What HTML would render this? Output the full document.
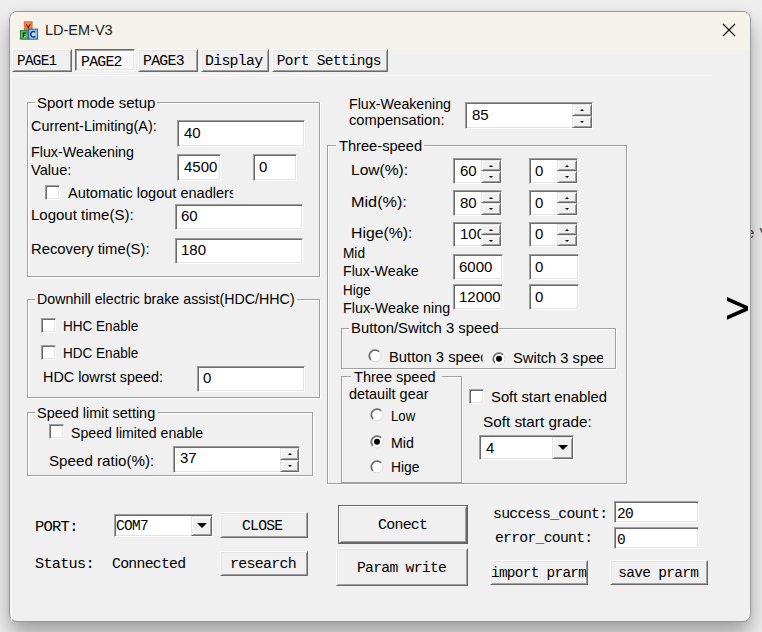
<!DOCTYPE html><html><head><meta charset="utf-8"><style>
*{margin:0;padding:0;box-sizing:border-box}
html,body{width:762px;height:632px;overflow:hidden;background:#eeeeee}
body{position:relative;font-family:"Liberation Sans",sans-serif}
.win{position:absolute;left:9px;top:11px;width:742px;height:611px;background:#f0f0f0;border:1px solid #9a9a9a;border-radius:8px;overflow:hidden;box-shadow:0 12px 20px rgba(0,0,0,.32),0 0 4px rgba(0,0,0,.05)}
.tb{position:absolute;left:0;top:0;right:0;height:37px;background:#f5f2ec}
.t{position:absolute;white-space:pre;line-height:1;color:#000}
.s{font-family:"Liberation Sans",sans-serif;font-size:15px}
.m{font-family:"Liberation Mono",monospace;font-size:14.5px;letter-spacing:-0.7px}
.ed{position:absolute;background:#fff;border:1px solid;border-color:#a0a0a0 #fff #fff #a0a0a0;box-shadow:inset 1px 1px 0 #696969,inset -1px -1px 0 #e3e3e3}
.bt{position:absolute;background:#f0f0f0;border:1px solid;border-color:#fff #696969 #696969 #fff;box-shadow:inset 1px 1px 0 #e3e3e3,inset -1px -1px 0 #a0a0a0}
.sb{position:absolute;background:#f0f0f0;border:1px solid;border-color:#e3e3e3 #696969 #696969 #e3e3e3;box-shadow:inset 1px 1px 0 #fff,inset -1px -1px 0 #a0a0a0}
.bt.df{outline:1px solid #646464}
.pr{position:absolute;background:#f7f7f7;border:1px solid;border-color:#696969 #fff #fff #696969;box-shadow:inset 1px 1px 0 #a0a0a0,inset -1px -1px 0 #e3e3e3}
.cb{position:absolute;background:#fff;border:1px solid;border-color:#a0a0a0 #fff #fff #a0a0a0;box-shadow:inset 1px 1px 0 #696969,inset -1px -1px 0 #e3e3e3}
.rd{position:absolute;width:13px;height:13px;border-radius:50%;background:#fff;border:1px solid;border-color:#a0a0a0 #fff #fff #a0a0a0;box-shadow:inset 1px 1px 0 #696969,inset -1px -1px 0 #e3e3e3}
.rd i{position:absolute;left:3px;top:3px;width:5px;height:5px;border-radius:50%;background:#000}
.gb{position:absolute;border:1px solid #a0a0a0;box-shadow:inset 1px 1px 0 #fff,1px 1px 0 #fff}
.patch{position:absolute;background:#f0f0f0}
i.up,i.dn{position:absolute;left:50%;top:50%;width:0;height:0;border-left:2px solid transparent;border-right:2px solid transparent;margin-left:-2px}
i.up{border-bottom:2px solid #000;margin-top:-1px}
i.dn{border-top:2px solid #000;margin-top:-1px}
i.dd{position:absolute;left:50%;top:50%;width:0;height:0;border-left:5px solid transparent;border-right:5px solid transparent;border-top:5px solid #000;margin-left:-5px;margin-top:-3px}
</style></head><body><div class="win"><div class="tb"></div></div>
<svg style="position:absolute;left:19px;top:20px" width="20" height="21" viewBox="0 0 20 21"><defs><radialGradient id="go" cx="50%" cy="40%" r="70%"><stop offset="0" stop-color="#f7a060"/><stop offset="1" stop-color="#dd6e2a"/></radialGradient><radialGradient id="gg" cx="50%" cy="50%" r="70%"><stop offset="0" stop-color="#9ee0a0"/><stop offset="1" stop-color="#2f9a40"/></radialGradient><radialGradient id="gb" cx="50%" cy="50%" r="70%"><stop offset="0" stop-color="#d0e8fa"/><stop offset="1" stop-color="#6aa0d8"/></radialGradient></defs><rect x="5.3" y="1.8" width="7.8" height="7.8" fill="url(#go)" stroke="#c86a30" stroke-width="0.8"/><path d="M7.3 4.3L9.2 7.6L11.1 4.3" stroke="#7a1e08" stroke-width="1.3" fill="none"/><rect x="1.4" y="10.6" width="7.8" height="8.6" fill="url(#gg)" stroke="#1f7a30" stroke-width="0.9"/><path d="M4.3 17.6V13H7.3M4.3 15.1H6.6" stroke="#0c4a18" stroke-width="1.4" fill="none"/><rect x="9.4" y="9.1" width="9.2" height="10.1" fill="url(#gb)" stroke="#2a5a9a" stroke-width="0.9"/><path d="M16.2 12.3A2.6 2.8 0 1 0 16.2 16.2" stroke="#143f85" stroke-width="1.5" fill="none"/></svg>
<div class="t s" style="left:45.00px;top:22px;color:#1c1c1c;font-size:14.5px;top:23px">LD-EM-V3</div>
<svg style="position:absolute;left:722px;top:23px" width="14" height="14" viewBox="0 0 14 14"><path d="M1 1L13 13M13 1L1 13" stroke="#1a1a1a" stroke-width="1.3"/></svg>
<div class="bt" style="left:12px;top:49px;width:60px;height:23px"></div>
<div class="pr" style="left:75px;top:49px;width:60px;height:22px"></div>
<div class="bt" style="left:138px;top:49px;width:60px;height:23px"></div>
<div class="bt" style="left:201px;top:49px;width:68px;height:23px"></div>
<div class="bt" style="left:272px;top:49px;width:116px;height:23px"></div>
<div class="t m" style="left:16.72px;top:54px;transform:scaleX(0.9846);transform-origin:0 0;">PAGE1</div>
<div class="t m" style="left:80.68px;top:55px;transform:scaleX(1.0179);transform-origin:0 0;">PAGE2</div>
<div class="t m" style="left:142.58px;top:54px;transform:scaleX(1.0231);transform-origin:0 0;">PAGE3</div>
<div class="t m" style="left:205.37px;top:54px;transform:scaleX(1.0255);transform-origin:0 0;">Display</div>
<div class="t m" style="left:276.70px;top:54px;">Port Settings</div>
<div style="position:absolute;left:11px;top:75px;width:701px;height:1px;background:#fff"></div>
<div style="position:absolute;left:11px;top:75px;width:1px;height:546px;background:#fff"></div>
<div class="gb" style="left:27px;top:102px;width:293px;height:175px"></div>
<div class="patch" style="left:35px;top:96px;width:122px;height:14px"></div>
<div class="t s" style="left:37.00px;top:95px;">Sport mode setup</div>
<div class="t s" style="left:31.04px;top:118px;transform:scaleX(0.9612);transform-origin:0 0;">Current-Limiting(A):</div>
<div class="ed" style="left:177px;top:120px;width:128px;height:27px"></div>
<div class="t s" style="left:184.00px;top:125px;">40</div>
<div class="t s" style="left:31.05px;top:144px;transform:scaleX(0.9528);transform-origin:0 0;">Flux-Weakening</div>
<div class="t s" style="left:31.30px;top:162px;transform:scaleX(0.9750);transform-origin:0 0;">Value:</div>
<div class="ed" style="left:177px;top:154px;width:44px;height:27px"></div>
<div class="t s" style="left:184.00px;top:159px;">4500</div>
<div class="ed" style="left:253px;top:154px;width:44px;height:27px"></div>
<div class="t s" style="left:259.00px;top:159px;">0</div>
<div class="cb" style="left:45px;top:185px;width:15px;height:15px"></div>
<div class="t s" style="left:68.00px;top:185px;width:170.10px;overflow:hidden;padding-bottom:5px;transform:scaleX(0.9700);transform-origin:0 0;">Automatic logout enadlers</div>
<div class="t s" style="left:31.00px;top:207px;">Logout time(S):</div>
<div class="ed" style="left:175px;top:204px;width:128px;height:26px"></div>
<div class="t s" style="left:181.00px;top:208px;">60</div>
<div class="t s" style="left:31.01px;top:241px;transform:scaleX(0.9873);transform-origin:0 0;">Recovery time(S):</div>
<div class="ed" style="left:175px;top:238px;width:128px;height:26px"></div>
<div class="t s" style="left:181.00px;top:242px;">180</div>
<div class="gb" style="left:27px;top:299px;width:293px;height:99px"></div>
<div class="patch" style="left:35px;top:292px;width:262px;height:14px"></div>
<div class="t s" style="left:37.05px;top:291px;transform:scaleX(0.9481);transform-origin:0 0;">Downhill electric brake assist(HDC/HHC)</div>
<div class="cb" style="left:41px;top:318px;width:15px;height:15px"></div>
<div class="t s" style="left:63.10px;top:318px;transform:scaleX(0.9024);transform-origin:0 0;">HHC Enable</div>
<div class="cb" style="left:41px;top:345px;width:15px;height:15px"></div>
<div class="t s" style="left:63.10px;top:345px;transform:scaleX(0.9024);transform-origin:0 0;">HDC Enable</div>
<div class="t s" style="left:43.04px;top:369px;transform:scaleX(0.9593);transform-origin:0 0;">HDC lowrst speed:</div>
<div class="ed" style="left:197px;top:366px;width:108px;height:26px"></div>
<div class="t s" style="left:203.00px;top:370px;">0</div>
<div class="gb" style="left:27px;top:412px;width:286px;height:64px"></div>
<div class="patch" style="left:35px;top:406px;width:123px;height:14px"></div>
<div class="t s" style="left:37.04px;top:405px;transform:scaleX(0.9645);transform-origin:0 0;">Speed limit setting</div>
<div class="cb" style="left:49px;top:424px;width:15px;height:15px"></div>
<div class="t s" style="left:71.06px;top:425px;transform:scaleX(0.9424);transform-origin:0 0;">Speed limited enable</div>
<div class="t s" style="left:48.99px;top:453px;transform:scaleX(1.0098);transform-origin:0 0;">Speed ratio(%):</div>
<div class="ed" style="left:173px;top:446px;width:127px;height:27px"></div>
<div class="t s" style="left:180.00px;top:450px;">37</div>
<div class="sb" style="left:280px;top:448px;width:19px;height:12px"><i class="up"></i></div>
<div class="sb" style="left:280px;top:460px;width:19px;height:12px"><i class="dn"></i></div>
<div class="t s" style="left:349.06px;top:96px;transform:scaleX(0.9434);transform-origin:0 0;">Flux-Weakening</div>
<div class="t s" style="left:349.02px;top:112px;transform:scaleX(0.9789);transform-origin:0 0;">compensation:</div>
<div class="ed" style="left:465px;top:102px;width:128px;height:27px"></div>
<div class="t s" style="left:472.00px;top:107px;">85</div>
<div class="sb" style="left:572px;top:104px;width:20px;height:12px"><i class="up"></i></div>
<div class="sb" style="left:572px;top:116px;width:20px;height:12px"><i class="dn"></i></div>
<div class="gb" style="left:327px;top:145px;width:300px;height:339px"></div>
<div class="patch" style="left:336px;top:139px;width:88px;height:14px"></div>
<div class="t s" style="left:339.00px;top:138px;transform:scaleX(0.9762);transform-origin:0 0;">Three-speed</div>
<div class="t s" style="left:350.96px;top:162px;transform:scaleX(1.0377);transform-origin:0 0;">Low(%):</div>
<div class="ed" style="left:453px;top:158px;width:49px;height:26px"></div>
<div class="t s" style="left:460.00px;top:163px;">60</div>
<div class="sb" style="left:481px;top:160px;width:20px;height:11px"><i class="up"></i></div>
<div class="sb" style="left:481px;top:171px;width:20px;height:12px"><i class="dn"></i></div>
<div class="ed" style="left:529px;top:158px;width:49px;height:26px"></div>
<div class="t s" style="left:535.00px;top:163px;">0</div>
<div class="sb" style="left:557px;top:160px;width:20px;height:11px"><i class="up"></i></div>
<div class="sb" style="left:557px;top:171px;width:20px;height:12px"><i class="dn"></i></div>
<div class="t s" style="left:350.92px;top:194px;transform:scaleX(1.0816);transform-origin:0 0;">Mid(%):</div>
<div class="ed" style="left:453px;top:190px;width:49px;height:26px"></div>
<div class="t s" style="left:460.00px;top:195px;">80</div>
<div class="sb" style="left:481px;top:192px;width:20px;height:11px"><i class="up"></i></div>
<div class="sb" style="left:481px;top:203px;width:20px;height:12px"><i class="dn"></i></div>
<div class="ed" style="left:529px;top:190px;width:49px;height:26px"></div>
<div class="t s" style="left:535.00px;top:195px;">0</div>
<div class="sb" style="left:557px;top:192px;width:20px;height:11px"><i class="up"></i></div>
<div class="sb" style="left:557px;top:203px;width:20px;height:12px"><i class="dn"></i></div>
<div class="t s" style="left:350.95px;top:225px;transform:scaleX(1.0536);transform-origin:0 0;">Hige(%):</div>
<div class="ed" style="left:453px;top:222px;width:49px;height:25px"></div>
<div class="t s" style="left:460.00px;top:226px;width:22.00px;overflow:hidden;padding-bottom:5px;">100</div>
<div class="sb" style="left:481px;top:224px;width:20px;height:11px"><i class="up"></i></div>
<div class="sb" style="left:481px;top:235px;width:20px;height:11px"><i class="dn"></i></div>
<div class="ed" style="left:529px;top:222px;width:49px;height:25px"></div>
<div class="t s" style="left:535.00px;top:226px;">0</div>
<div class="sb" style="left:557px;top:224px;width:20px;height:11px"><i class="up"></i></div>
<div class="sb" style="left:557px;top:235px;width:20px;height:11px"><i class="dn"></i></div>
<div class="t s" style="left:343.09px;top:245px;transform:scaleX(0.9091);transform-origin:0 0;">Mid</div>
<div class="t s" style="left:343.05px;top:263px;transform:scaleX(0.9487);transform-origin:0 0;">Flux-Weake</div>
<div class="ed" style="left:453px;top:254px;width:50px;height:26px"></div>
<div class="t s" style="left:459.00px;top:259px;">6000</div>
<div class="ed" style="left:529px;top:254px;width:50px;height:26px"></div>
<div class="t s" style="left:535.00px;top:259px;">0</div>
<div class="t s" style="left:343.10px;top:282px;transform:scaleX(0.8966);transform-origin:0 0;">Hige</div>
<div class="t s" style="left:343.05px;top:300px;transform:scaleX(0.9545);transform-origin:0 0;">Flux-Weake ning</div>
<div class="ed" style="left:453px;top:284px;width:50px;height:26px"></div>
<div class="t s" style="left:459.00px;top:289px;">12000</div>
<div class="ed" style="left:529px;top:284px;width:50px;height:26px"></div>
<div class="t s" style="left:535.00px;top:289px;">0</div>
<div class="gb" style="left:341px;top:328px;width:275px;height:41px"></div>
<div class="patch" style="left:349px;top:321px;width:150px;height:14px"></div>
<div class="t s" style="left:351.01px;top:320px;transform:scaleX(0.9905);transform-origin:0 0;">Button/Switch 3 speed</div>
<svg style="position:absolute;left:368px;top:349px" width="14" height="14" viewBox="0 0 14 14"><circle cx="7" cy="6.8" r="6.1" fill="#fff" stroke="#dadada" stroke-width="1"/><path d="M2.9 10.9A5.8 5.8 0 0 1 11.1 2.7" stroke="#707070" stroke-width="1.8" fill="none"/></svg>
<div class="t s" style="left:389.02px;top:349px;width:95.43px;overflow:hidden;padding-bottom:5px;transform:scaleX(0.9848);transform-origin:0 0;">Button 3 speed</div>
<svg style="position:absolute;left:492px;top:352px" width="14" height="14" viewBox="0 0 14 14"><circle cx="7" cy="6.8" r="6.1" fill="#fff" stroke="#dadada" stroke-width="1"/><path d="M2.9 10.9A5.8 5.8 0 0 1 11.1 2.7" stroke="#707070" stroke-width="1.8" fill="none"/><circle cx="7" cy="6.8" r="3" fill="#000"/></svg>
<div class="t s" style="left:513.02px;top:350px;width:91.84px;overflow:hidden;padding-bottom:5px;transform:scaleX(0.9797);transform-origin:0 0;">Switch 3 speed</div>
<div class="gb" style="left:341px;top:376px;width:121px;height:107px"></div>
<div class="patch" style="left:351px;top:370px;width:91px;height:14px"></div>
<div class="t s" style="left:354.00px;top:369px;transform:scaleX(0.9687);transform-origin:0 0;">Three speed</div>
<div class="t s" style="left:349.04px;top:386px;transform:scaleX(0.9630);transform-origin:0 0;">detauilt gear</div>
<svg style="position:absolute;left:370px;top:408px" width="14" height="14" viewBox="0 0 14 14"><circle cx="7" cy="6.8" r="6.1" fill="#fff" stroke="#dadada" stroke-width="1"/><path d="M2.9 10.9A5.8 5.8 0 0 1 11.1 2.7" stroke="#707070" stroke-width="1.8" fill="none"/></svg>
<div class="t s" style="left:391.12px;top:408px;transform:scaleX(0.8778);transform-origin:0 0;">Low</div>
<svg style="position:absolute;left:370px;top:435px" width="14" height="14" viewBox="0 0 14 14"><circle cx="7" cy="6.8" r="6.1" fill="#fff" stroke="#dadada" stroke-width="1"/><path d="M2.9 10.9A5.8 5.8 0 0 1 11.1 2.7" stroke="#707070" stroke-width="1.8" fill="none"/><circle cx="7" cy="6.8" r="3" fill="#000"/></svg>
<div class="t s" style="left:391.05px;top:435px;transform:scaleX(0.9455);transform-origin:0 0;">Mid</div>
<svg style="position:absolute;left:370px;top:460px" width="14" height="14" viewBox="0 0 14 14"><circle cx="7" cy="6.8" r="6.1" fill="#fff" stroke="#dadada" stroke-width="1"/><path d="M2.9 10.9A5.8 5.8 0 0 1 11.1 2.7" stroke="#707070" stroke-width="1.8" fill="none"/></svg>
<div class="t s" style="left:391.08px;top:459px;transform:scaleX(0.9207);transform-origin:0 0;">Hige</div>
<div style="position:absolute;left:328px;top:483px;width:298px;height:1px;background:#a0a0a0"></div>
<div class="cb" style="left:469px;top:389px;width:15px;height:15px"></div>
<div class="t s" style="left:491.01px;top:389px;transform:scaleX(0.9871);transform-origin:0 0;">Soft start enabled</div>
<div class="t s" style="left:482.98px;top:414px;transform:scaleX(1.0192);transform-origin:0 0;">Soft start grade:</div>
<div class="ed" style="left:479px;top:435px;width:95px;height:25px"></div>
<div class="t s" style="left:486.00px;top:440px;">4</div>
<div class="sb" style="left:552px;top:437px;width:21px;height:22px"><i class="dd"></i></div>
<div class="t m" style="left:34.73px;top:520px;transform:scaleX(1.0667);transform-origin:0 0;">PORT:</div>
<div class="ed" style="left:114px;top:514px;width:99px;height:23px"></div>
<div class="t m" style="left:116.00px;top:519px;">COM7</div>
<div class="sb" style="left:191px;top:516px;width:21px;height:20px"><i class="dd"></i></div>
<div class="bt" style="left:220px;top:512px;width:88px;height:26px"></div>
<div class="t m" style="left:242.29px;top:519px;transform:scaleX(1.0103);transform-origin:0 0;">CLOSE</div>
<div class="t m" style="left:35.35px;top:557px;transform:scaleX(1.0500);transform-origin:0 0;">Status:</div>
<div class="t m" style="left:112.28px;top:557px;transform:scaleX(1.0197);transform-origin:0 0;">Connected</div>
<div class="bt" style="left:220px;top:551px;width:88px;height:25px"></div>
<div class="t m" style="left:229.74px;top:557px;transform:scaleX(1.0306);transform-origin:0 0;">research</div>
<div class="bt df" style="left:339px;top:506px;width:128px;height:37px"></div>
<div class="t m" style="left:377.77px;top:518px;transform:scaleX(1.0261);transform-origin:0 0;">Conect</div>
<div class="bt" style="left:336px;top:548px;width:132px;height:38px"></div>
<div class="t m" style="left:356.59px;top:561px;transform:scaleX(1.0126);transform-origin:0 0;">Param write</div>
<div class="t m" style="left:493.38px;top:507px;transform:scaleX(1.0213);transform-origin:0 0;">success_count:</div>
<div class="ed" style="left:614px;top:501px;width:85px;height:22px"></div>
<div class="t m" style="left:617.00px;top:507px;">20</div>
<div class="t m" style="left:495.28px;top:531px;transform:scaleX(1.0152);transform-origin:0 0;">error_count:</div>
<div class="ed" style="left:614px;top:527px;width:85px;height:22px"></div>
<div class="t m" style="left:617.00px;top:533px;">0</div>
<div class="bt" style="left:490px;top:560px;width:98px;height:25px"></div>
<div class="t m" style="left:490.61px;top:566px;transform:scaleX(0.9916);transform-origin:0 0;">import prarm</div>
<div class="bt" style="left:610px;top:560px;width:98px;height:25px"></div>
<div class="t m" style="left:618.20px;top:566px;">save prarm</div>
<div style="position:absolute;left:751px;top:220px;width:11px;height:24px;overflow:hidden"><div class="t s" style="left:-5px;top:5px;color:#3a3a3a;word-spacing:1px">e V</div></div>
<svg style="position:absolute;left:0;top:0" width="762" height="632"><polygon points="727,297 748,306.2 748,310.5 727,319.7 727,315.7 743.8,308.35 727,301" fill="#000"/></svg></body></html>
